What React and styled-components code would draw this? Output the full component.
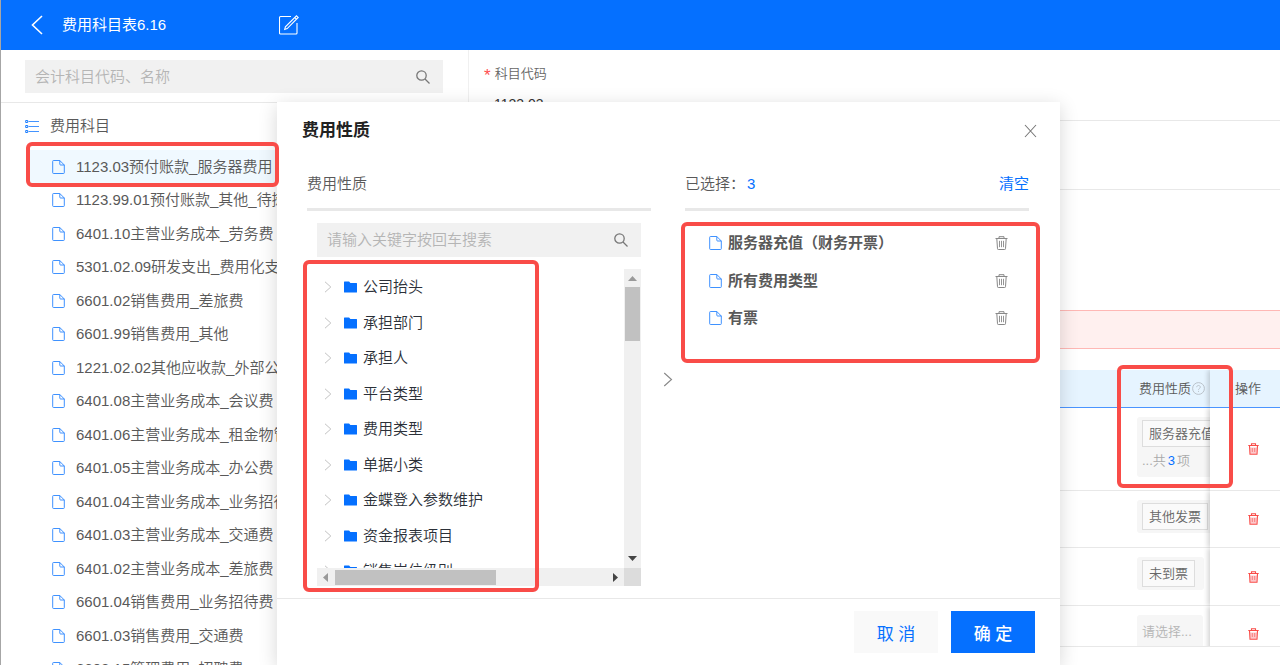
import React from 'react'
import styled, { createGlobalStyle, css } from 'styled-components'

const blue = '#0570ff'
const red = '#f94c48'
const grey = '#f1f1f1'
const line = '#e8e8e8'

const GlobalStyle = createGlobalStyle`
    *, *::before, *::after {
        box-sizing: border-box;
    }
    body {
        margin: 0;
        overflow: hidden;
        background: #fff;
        color: #595959;
        font-family: "Liberation Sans", "Noto Sans CJK SC", sans-serif;
        font-size: 15px;
        font-weight: 350;
        line-height: 20px;
    }
    button, input {
        font: inherit;
        color: inherit;
    }
    ul {
        list-style: none;
        margin: 0;
        padding: 0;
    }
`

const mark = css`
    content: "";
    position: absolute;
    border: 4px solid ${ red };
    border-radius: 6px;
    pointer-events: none;
`

const IconButton = styled.button`
    display: flex;
    align-items: center;
    justify-content: center;
    padding: 0;
    border: 0;
    background: none;
    color: ${ props => props.color || '#777' };
    cursor: pointer;
`

const Page = styled.div`
    display: flex;
    flex-direction: column;
    height: 100vh;
    overflow: hidden;
    border-left: 1px solid #a6a6a6;
`

const TopBar = styled.header`
    display: flex;
    align-items: center;
    flex: none;
    height: 50px;
    padding-left: 28px;
    background: ${ blue };
    color: #fff;
`

const PageTitle = styled.h1`
    width: 217px;
    margin: 0 0 0 17px;
    font-size: 15px;
    font-weight: 400;
`

const Main = styled.main`
    display: grid;
    grid-template-columns: 468px 1fr;
    flex: 1;
    min-height: 0;
`

const Sidebar = styled.aside`
    border-right: 1px solid #f0f0f0;
`

const SearchBox = styled.div`
    display: flex;
    align-items: center;
    height: ${ props => props.height || 33 }px;
    padding: 0 13px 0 10px;
    background: ${ grey };
`

const SearchInput = styled.input`
    flex: 1;
    min-width: 0;
    padding: 0;
    border: 0;
    outline: 0;
    background: none;
    &::placeholder {
        color: #b5b5b5;
        opacity: 1;
    }
`

const SidebarSearch = styled.div`
    padding: 10px 25px 9px 24px;
    border-bottom: 1px solid ${ line };
`

const TreeRoot = styled.div`
    display: flex;
    align-items: center;
    gap: 11px;
    height: 45px;
    padding-left: 24px;
`

const SubjectList = styled.ul`
    display: grid;
    grid-auto-rows: 33px 34px;
    padding-top: 2px;
`

const Subject = styled.li`
    position: relative;
    display: flex;
    align-items: center;
    gap: 11px;
    margin-left: 28px;
    padding-left: 23px;
    white-space: nowrap;
    ${ props => props.$active && css`
        background: #f0f9ff;
        &::after {
            ${ mark }
            z-index: 3;
            left: -3px;
            top: -8px;
            width: 253px;
            height: 45px;
        }
    ` }
`

const Detail = styled.section`
    min-width: 0;
`

const Field = styled.div`
    display: flex;
    flex-direction: column;
    gap: 10px;
    height: ${ props => props.height }px;
    padding: 14px 0 0 15px;
    border-bottom: 1px solid ${ line };
`

const FieldLabel = styled.label`
    display: flex;
    align-items: center;
    height: 20px;
    font-size: 13px;
    color: #666;
    &::before {
        content: "*";
        margin: 4px 4px 0 0;
        color: #ff4d4f;
        font-size: 17px;
    }
`

const FieldInput = styled.input`
    padding: 0 0 0 10px;
    border: 0;
    outline: 0;
    background: none;
    font-size: 14px;
    color: #333;
`

const Notice = styled.div`
    height: 39px;
    margin: 120px 0 21px;
    border: 1px solid #ffb8b5;
    border-width: 1px 0;
    background: #fff0ef;
`

const TableWrap = styled.div`
    position: relative;
    &::after {
        ${ mark }
        top: -5px;
        right: 47px;
        width: 116px;
        height: 123px;
    }
`

const TableScroll = styled.div`
    height: 277px;
    overflow: hidden;
    border-bottom: 1px solid ${ line };
`

const Table = styled.table`
    width: 100%;
    table-layout: fixed;
    border-collapse: separate;
    border-spacing: 0;
    font-size: 13px;
`

const fixedCell = css`
    position: relative;
    overflow: visible;
    vertical-align: middle;
    box-shadow: -2px 0 5px rgba(0, 0, 0, 0.18);
    clip-path: inset(0 0 0 -8px);
`

const HeadCell = styled.th`
    height: 38px;
    padding: 0 0 0 ${ props => props.$pad || 10 }px;
    overflow: hidden;
    border-bottom: 1px solid #4a94ff;
    background: #e6f4ff;
    font-weight: 350;
    text-align: left;
    white-space: nowrap;
    ${ props => props.$fixed && fixedCell }
`

const Cell = styled.td`
    height: ${ props => props.$height }px;
    padding: 0 0 0 ${ props => props.$fixed ? 38 : 8 }px;
    overflow: hidden;
    border-bottom: 1px solid ${ line };
    background: #fff;
    vertical-align: top;
    ${ props => props.$fixed && fixedCell }
`

const HeadLabel = styled.span`
    display: flex;
    align-items: center;
    gap: 1px;
`

const Picker = styled.div`
    width: ${ props => props.width }px;
    margin-top: 9px;
    padding: 3px 5px;
    border-radius: 3px;
    background: #f6f6f6;
    color: #b5b5b5;
    line-height: 27px;
    white-space: nowrap;
`

const Tag = styled.span`
    display: inline-block;
    padding: 0 6px;
    border: 1px solid #ddd;
    background: #fafafa;
    color: #666;
    line-height: 25px;
    vertical-align: top;
`

const More = styled.div`
    color: #aaa;
    b {
        padding: 0 2px;
        color: ${ blue };
        font-weight: 400;
    }
`

const Overlay = styled.div`
    position: absolute;
    inset: 0;
    z-index: 2;
    display: flex;
    padding: 102px 220px 0 277px;
    overflow: hidden;
    pointer-events: none;
`

const Modal = styled.div`
    flex: 1;
    min-width: 0;
    background: #fff;
    box-shadow: 0 4px 18px rgba(0, 0, 0, 0.16);
    pointer-events: auto;
`

const ModalHead = styled.div`
    display: flex;
    align-items: center;
    justify-content: space-between;
    height: 58px;
    padding: 0 23px 0 25px;
`

const ModalTitle = styled.h2`
    margin: 0;
    color: #222;
    font-size: 17px;
    font-weight: 700;
`

const Transfer = styled.div`
    display: grid;
    grid-template-columns: 1fr 34px 1fr;
    padding: 0 31px 12px 30px;
`

const Column = styled.section`
    position: relative;
    min-width: 0;
`

const ColumnHead = styled.div`
    display: flex;
    align-items: center;
    gap: 2px;
    height: 51px;
    border-bottom: 3px solid ${ line };
`

const Count = styled.span`
    flex: 1;
    color: ${ blue };
`

const LinkButton = styled.button`
    padding: 0;
    border: 0;
    background: none;
    color: ${ blue };
    font-weight: 400;
    cursor: pointer;
`

const ColumnBody = styled.div`
    display: grid;
    gap: 12px;
    padding: 12px 10px 0;
`

const TreeBox = styled.div`
    display: grid;
    grid-template-columns: 1fr 17px;
    grid-template-rows: 299px 18px;
`

const TreeMark = styled.div`
    &::after {
        ${ mark }
        left: -4px;
        top: 100px;
        bottom: -6px;
        width: 236px;
    }
`

const Tree = styled.ul`
    display: grid;
    grid-auto-rows: 36px 35px;
    overflow: hidden;
    color: #2b3038;
`

const TreeNode = styled.li`
    display: flex;
    align-items: center;
    padding-left: 7px;
    svg:first-child {
        margin-right: 12px;
    }
    svg + svg {
        margin-right: 6px;
    }
`

const VBar = styled.div`
    display: flex;
    flex-direction: column;
    align-items: center;
    justify-content: space-between;
    padding: 7px 0;
    background: #f0f0f0;
`

const HBar = styled(VBar)`
    flex-direction: row;
    padding: 0 6px;
`

const VThumb = styled.div`
    width: 15px;
    height: 54px;
    margin: 6px 0 auto;
    background: #c1c1c1;
`

const HThumb = styled.div`
    width: 161px;
    height: 15px;
    margin: 0 auto 0 7px;
    background: #c1c1c1;
`

const Corner = styled.div`
    background: #dcdcdc;
`

const Between = styled.div`
    display: flex;
    align-items: center;
    justify-content: center;
    padding-top: 12px;
`

const Picked = styled.ul`
    display: grid;
    grid-auto-rows: 38px 37px;
    padding: 13px 21px 0 24px;
    font-weight: 700;
    &::after {
        ${ mark }
        top: 62px;
        left: -4px;
        right: -11px;
        height: 141px;
    }
`

const PickedItem = styled.li`
    display: flex;
    align-items: center;
    gap: 6px;
    button {
        margin-left: auto;
    }
`

const ModalFoot = styled.div`
    display: flex;
    justify-content: flex-end;
    gap: 13px;
    padding: 12px 25px;
    border-top: 1px solid ${ line };
`

const Button = styled.button`
    width: 84px;
    height: 42px;
    padding: 0;
    border: 0;
    background: ${ props => props.$primary ? blue : '#f9f9f9' };
    color: ${ props => props.$primary ? '#fff' : blue };
    font-size: 17px;
    font-weight: ${ props => props.$primary ? 500 : 400 };
    line-height: normal;
    cursor: pointer;
`

const BackIcon = () => (
    <svg width="16" height="20" viewBox="0 0 16 20" fill="none" stroke="currentColor" strokeWidth="1.6">
        <path d="M13 1 3.500 10 13 19" />
    </svg>
)

const EditIcon = () => (
    <svg width="20" height="20" viewBox="0 0 20 20" fill="none" stroke="currentColor" strokeWidth="1.1">
        <path d="M12 1.500H1.500a1 1 0 0 0-1 1v15.500a1 1 0 0 0 1 1H17a1 1 0 0 0 1-1V8" />
        <path d="M17.500.8l1.700 1.600-11 11.200-2.500.8.700-2.500zM15.800 2.600l1.700 1.600" />
    </svg>
)

const SearchIcon = () => (
    <svg width="14" height="14" viewBox="0 0 14 14" fill="none" stroke="currentColor" strokeWidth="1.3">
        <circle cx="5.500" cy="5.500" r="4.700" />
        <path d="M9 9l4.500 4.500" />
    </svg>
)

const ListIcon = () => (
    <svg width="14" height="14" viewBox="0 0 14 14" fill="none" stroke={ blue }>
        <path d="M3.500 2.500H14M3.500 7.500H14M3.500 12.500H14" strokeWidth="1" opacity="0.75" />
        <path d="M.7 1.500h2v2h-2zM.7 6.500h2v2h-2zM.7 11.500h2v2h-2z" strokeWidth="0.9" />
    </svg>
)

const FileIcon = () => (
    <svg width="13" height="14" viewBox="0 0 13 14" fill="none" stroke={ blue } strokeWidth="0.9" opacity="0.85">
        <path d="M7.800.5H1.500a.8.800 0 0 0-.8.800v11.400a.8.800 0 0 0 .8.800h10a.8.800 0 0 0 .8-.8V5z" />
        <path d="M7.800.5v3.700a.8.800 0 0 0 .8.800h3.700" />
    </svg>
)

const FolderIcon = () => (
    <svg width="13" height="12" viewBox="0 0 13 12" fill={ blue }>
        <path d="M0 .9A.5.500 0 0 1 .5.400h4.600l1.300 1.500h6.100a.5.500 0 0 1 .5.500v8.600a.5.500 0 0 1-.5.500H.5A.5.500 0 0 1 0 11z" />
    </svg>
)

const ChevronIcon = ({ width = 8, height = 12, color = '#bbb' }) => (
    <svg width={ width } height={ height } viewBox="0 0 8 12" fill="none" stroke={ color } strokeWidth="0.9">
        <path d="M1 .8 6.800 6 1 11.200" />
    </svg>
)

const TrashIcon = () => (
    <svg width="13" height="14" viewBox="0 0 13 14" fill="none" stroke="currentColor" strokeWidth="1">
        <path d="M.5 2.500h12M4 2.500V.7h5v1.800M1.800 2.500l.7 10.200a.8.800 0 0 0 .8.800h6.400a.8.800 0 0 0 .8-.8l.7-10.200" />
        <path d="M4.500 4.800v6.400M6.500 4.800v6.400M8.500 4.800v6.400" strokeWidth="0.9" />
    </svg>
)

const RowTrashIcon = () => (
    <svg width="11" height="12" viewBox="0 0 11 12" fill="none" stroke={ red } strokeWidth="1.100">
        <path d="M2 4.500h7l-.4 6.500H2.400z" fill="#fcc9cc" stroke="none" />
        <path d="M.3 2.500h10.400M3.500 2.500V.7h4v1.800M1.500 2.500l.5 8.800h7l.5-8.800" />
        <path d="M4.300 5v4M6.700 5v4" strokeWidth="1" opacity="0.6" />
    </svg>
)

const HelpIcon = () => (
    <svg width="13" height="13" viewBox="0 0 13 13" fill="none" stroke="#b5bcc4" strokeWidth="0.9">
        <circle cx="6.500" cy="6.500" r="5.900" />
        <path d="M4.700 5.200c0-2.300 3.600-2.300 3.600 0 0 1.300-1.800 1.300-1.800 2.600M6.500 8.900v1" />
    </svg>
)

const CloseIcon = () => (
    <svg width="13" height="14" viewBox="0 0 13 14" fill="none" stroke="currentColor" strokeWidth="1.100">
        <path d="M1 1l11 12M12 1 1 13" />
    </svg>
)

const Triangle = ({ points, color = '#444', width = 9, height = 5 }) => (
    <svg width={ width } height={ height } viewBox={ `0 0 ${ width } ${ height }` } fill={ color }>
        <polygon points={ points } />
    </svg>
)

const subjects = [
    '1123.03预付账款_服务器费用',
    '1123.99.01预付账款_其他_待摊费用',
    '6401.10主营业务成本_劳务费',
    '5301.02.09研发支出_费用化支出',
    '6601.02销售费用_差旅费',
    '6601.99销售费用_其他',
    '1221.02.02其他应收款_外部公司',
    '6401.08主营业务成本_会议费',
    '6401.06主营业务成本_租金物管',
    '6401.05主营业务成本_办公费',
    '6401.04主营业务成本_业务招待费',
    '6401.03主营业务成本_交通费',
    '6401.02主营业务成本_差旅费',
    '6601.04销售费用_业务招待费',
    '6601.03销售费用_交通费',
    '6602.15管理费用_招聘费'
]

const nodes = [
    '公司抬头',
    '承担部门',
    '承担人',
    '平台类型',
    '费用类型',
    '单据小类',
    '金蝶登入参数维护',
    '资金报表项目',
    '销售岗位级别'
]

const picked = [ '服务器充值（财务开票）', '所有费用类型', '有票' ]

const rows = [
    { id: 1, height: 83, width: 80, tag: '服务器充值', total: 3 },
    { id: 2, height: 57, width: 80, tag: '其他发票' },
    { id: 3, height: 58, width: 67, tag: '未到票' },
    { id: 4, height: 57, width: 66 }
]

const SubjectTree = () => (
    <Sidebar>
        <SidebarSearch>
            <SearchBox>
                <SearchInput aria-label="会计科目代码、名称" placeholder="会计科目代码、名称" />
                <IconButton aria-label="搜索"><SearchIcon /></IconButton>
            </SearchBox>
        </SidebarSearch>
        <TreeRoot><ListIcon />费用科目</TreeRoot>
        <SubjectList>
            { subjects.map( ( name, i ) => (
                <Subject key={ name } $active={ i === 0 }><FileIcon />{ name }</Subject>
            ) ) }
        </SubjectList>
    </Sidebar>
)

const SubjectDetail = () => (
    <Detail>
        <Field height={ 71 }>
            <FieldLabel htmlFor="code">科目代码</FieldLabel>
            <FieldInput id="code" defaultValue="1123.03" />
        </Field>
        <Field height={ 69 } />
        <Notice />
        <TableWrap>
            <TableScroll>
                <Table>
                    <colgroup>
                        <col />
                        <col width="81" />
                        <col width="70" />
                    </colgroup>
                    <thead>
                        <tr>
                            <HeadCell />
                            <HeadCell><HeadLabel>费用性质<HelpIcon /></HeadLabel></HeadCell>
                            <HeadCell $fixed $pad={ 25 }>操作</HeadCell>
                        </tr>
                    </thead>
                    <tbody>
                        { rows.map( row => (
                            <tr key={ row.id }>
                                <Cell $height={ row.height } />
                                <Cell>
                                    <Picker width={ row.width }>
                                        { row.tag ? <Tag>{ row.tag }</Tag> : '请选择...' }
                                        { row.total && <More>...共<b>{ row.total }</b>项</More> }
                                    </Picker>
                                </Cell>
                                <Cell $fixed>
                                    <IconButton aria-label="删除"><RowTrashIcon /></IconButton>
                                </Cell>
                            </tr>
                        ) ) }
                    </tbody>
                </Table>
            </TableScroll>
        </TableWrap>
    </Detail>
)

const NatureDialog = () => (
    <Overlay>
        <Modal role="dialog" aria-labelledby="dialog-title">
            <ModalHead>
                <ModalTitle id="dialog-title">费用性质</ModalTitle>
                <IconButton aria-label="关闭"><CloseIcon /></IconButton>
            </ModalHead>
            <Transfer>
                <Column>
                    <ColumnHead>费用性质</ColumnHead>
                    <ColumnBody>
                        <SearchBox height={ 34 }>
                            <SearchInput aria-label="关键字" placeholder="请输入关键字按回车搜素" />
                            <IconButton aria-label="搜索"><SearchIcon /></IconButton>
                        </SearchBox>
                        <TreeBox>
                            <Tree>
                                { nodes.map( name => (
                                    <TreeNode key={ name }><ChevronIcon /><FolderIcon />{ name }</TreeNode>
                                ) ) }
                            </Tree>
                            <VBar>
                                <Triangle points="0,5 4.500,0 9,5" color="#999" />
                                <VThumb />
                                <Triangle points="0,0 9,0 4.500,5" />
                            </VBar>
                            <HBar>
                                <Triangle points="5,0 0,4.500 5,9" color="#999" width={ 5 } height={ 9 } />
                                <HThumb />
                                <Triangle points="0,0 5,4.500 0,9" width={ 5 } height={ 9 } />
                            </HBar>
                            <Corner />
                        </TreeBox>
                    </ColumnBody>
                    <TreeMark />
                </Column>
                <Between><ChevronIcon width={ 10 } height={ 15 } color="#888" /></Between>
                <Column>
                    <ColumnHead>
                        已选择：
                        <Count>{ picked.length }</Count>
                        <LinkButton>清空</LinkButton>
                    </ColumnHead>
                    <Picked>
                        { picked.map( name => (
                            <PickedItem key={ name }>
                                <FileIcon />{ name }
                                <IconButton aria-label="删除" color="#888"><TrashIcon /></IconButton>
                            </PickedItem>
                        ) ) }
                    </Picked>
                </Column>
            </Transfer>
            <ModalFoot>
                <Button>取 消</Button>
                <Button $primary>确 定</Button>
            </ModalFoot>
        </Modal>
    </Overlay>
)

export default () => (
    <Page>
        <GlobalStyle />
        <TopBar>
            <IconButton aria-label="返回" color="#fff"><BackIcon /></IconButton>
            <PageTitle>费用科目表6.16</PageTitle>
            <IconButton aria-label="编辑" color="#fff"><EditIcon /></IconButton>
        </TopBar>
        <Main>
            <SubjectTree />
            <SubjectDetail />
        </Main>
        <NatureDialog />
    </Page>
)
